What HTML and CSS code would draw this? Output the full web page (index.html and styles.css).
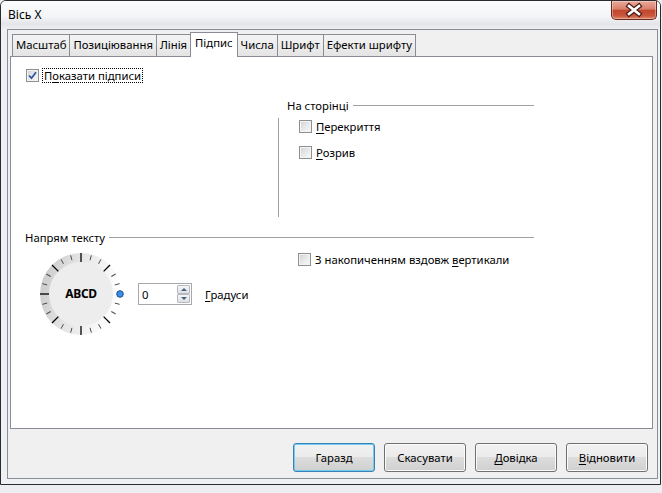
FILE: index.html
```html
<!DOCTYPE html>
<html lang="uk">
<head>
    <meta charset="UTF-8">
    <meta name="viewport" content="width=device-width, initial-scale=1.0">
    <title>Вісь X</title>
    <link rel="stylesheet" href="styles.css">
</head>
<body>
    <div class="window">
        <div class="titlebar">
            <span class="title">Вісь X</span>
            <button class="close" aria-label="Закрити">
                <svg width="44" height="18" viewBox="0 0 44 18">
                    <path d="M17 5 L27 13 M27 5 L17 13" stroke="#4a1d15" stroke-width="5" stroke-linecap="square"/>
                    <path d="M17 5 L27 13 M27 5 L17 13" stroke="#fff" stroke-width="2.6" stroke-linecap="square"/>
                </svg>
            </button>
        </div>
        <div class="client">
            <div class="tabs">
                <div class="tab">Масштаб</div>
                <div class="tab">Позиціювання</div>
                <div class="tab">Лінія</div>
                <div class="tab active">Підпис</div>
                <div class="tab">Числа</div>
                <div class="tab">Шрифт</div>
                <div class="tab">Ефекти шрифту</div>
            </div>
            <div class="panel">
                <label class="check-row show-labels">
                    <span class="check checked">
                        <svg width="11" height="11" viewBox="0 0 11 11"><path d="M2 5.5 L4.5 8.2 L9 2.2" fill="none" stroke="#2f56a0" stroke-width="1.8"/></svg>
                    </span>
                    <span class="focus">П<u>о</u>казати підписи</span>
                </label>

                <div class="top-area">
                    <div></div>
                    <div class="group">
                        <div class="group-head"><span>На сторінці</span><i class="rule"></i></div>
                        <div class="group-body">
                            <label class="check-row"><span class="check"></span><span class="text"><u>П</u>ерекриття</span></label>
                            <label class="check-row"><span class="check"></span><span class="text"><u>Р</u>озрив</span></label>
                        </div>
                    </div>
                </div>

                <div class="group-head wide"><span>Напрям тексту</span><i class="rule"></i></div>
                <div class="bottom-area">
                    <div class="dial-row">
                        <svg class="dial" width="88" height="88" viewBox="0 0 88 88">
                            <defs>
                                <linearGradient id="ring" x1="0" y1="0" x2="1" y2="0.25">
                                    <stop offset="0" stop-color="#c6c6c6"/>
                                    <stop offset="0.55" stop-color="#e8e8e8"/>
                                    <stop offset="1" stop-color="#ffffff"/>
                                </linearGradient>
                            </defs>
                            <circle cx="44" cy="44" r="41" fill="url(#ring)"/>
                            <circle cx="44" cy="44" r="32" fill="#ededed"/>
                            <g stroke="#4a4a4a" stroke-width="0.9">
                                <line x1="44" y1="4" x2="44" y2="9" transform="rotate(15 44 44)"/>
                                <line x1="44" y1="4" x2="44" y2="9" transform="rotate(30 44 44)"/>
                                <line x1="44" y1="4" x2="44" y2="9" transform="rotate(60 44 44)"/>
                                <line x1="44" y1="4" x2="44" y2="9" transform="rotate(75 44 44)"/>
                                <line x1="44" y1="4" x2="44" y2="9" transform="rotate(105 44 44)"/>
                                <line x1="44" y1="4" x2="44" y2="9" transform="rotate(120 44 44)"/>
                                <line x1="44" y1="4" x2="44" y2="9" transform="rotate(150 44 44)"/>
                                <line x1="44" y1="4" x2="44" y2="9" transform="rotate(165 44 44)"/>
                                <line x1="44" y1="4" x2="44" y2="9" transform="rotate(195 44 44)"/>
                                <line x1="44" y1="4" x2="44" y2="9" transform="rotate(210 44 44)"/>
                                <line x1="44" y1="4" x2="44" y2="9" transform="rotate(240 44 44)"/>
                                <line x1="44" y1="4" x2="44" y2="9" transform="rotate(255 44 44)"/>
                                <line x1="44" y1="4" x2="44" y2="9" transform="rotate(285 44 44)"/>
                                <line x1="44" y1="4" x2="44" y2="9" transform="rotate(300 44 44)"/>
                                <line x1="44" y1="4" x2="44" y2="9" transform="rotate(330 44 44)"/>
                                <line x1="44" y1="4" x2="44" y2="9" transform="rotate(345 44 44)"/>
                            </g>
                            <g stroke="#000" stroke-width="1.3">
                                <line x1="44" y1="3" x2="44" y2="12"/>
                                <line x1="44" y1="3" x2="44" y2="12" transform="rotate(45 44 44)"/>
                                <line x1="44" y1="3" x2="44" y2="12" transform="rotate(135 44 44)"/>
                                <line x1="44" y1="3" x2="44" y2="12" transform="rotate(180 44 44)"/>
                                <line x1="44" y1="3" x2="44" y2="12" transform="rotate(225 44 44)"/>
                                <line x1="44" y1="3" x2="44" y2="12" transform="rotate(270 44 44)"/>
                                <line x1="44" y1="3" x2="44" y2="12" transform="rotate(315 44 44)"/>
                            </g>
                            <text x="44" y="48" text-anchor="middle" class="dial-text">ABCD</text>
                            <circle cx="83" cy="44" r="3.3" fill="#3d8fe6" stroke="#1d4f94" stroke-width="1"/>
                        </svg>
                        <div class="spin">
                            <span class="spin-value">0</span>
                            <span class="spin-btns">
                                <span class="spin-btn"><i class="arrow up"></i></span>
                                <span class="spin-btn"><i class="arrow down"></i></span>
                            </span>
                        </div>
                        <span class="unit"><u>Г</u>радуси</span>
                    </div>
                    <label class="check-row stack"><span class="check"></span><span class="text">З накопиченням вздовж <u>в</u>ертикали</span></label>
                </div>
            </div>
            <div class="buttons">
                <button class="btn default">Гаразд</button>
                <button class="btn">Скасувати</button>
                <button class="btn"><u>Д</u>овідка</button>
                <button class="btn"><u>В</u>ідновити</button>
            </div>
        </div>
    </div>
</body>
</html>
```

FILE: styles.css
```css
body {
    margin: 0;
    background: #eceef0;
    font-family: "Noto Sans", sans-serif;
    font-size: 11.3px;
    color: #000;
}
u {
    text-decoration-thickness: 1px;
    text-underline-offset: 2px;
}
.window {
    width: 661px;
    height: 485px;
    box-sizing: border-box;
    border: 1px solid #2b2b2b;
    border-radius: 6px 6px 0 0;
    background: #eef0f3;
    padding: 0 1px 0 6px;
    display: flex;
    flex-direction: column;
}
.titlebar {
    height: 28px;
    margin: 0 -1px 0 -6px;
    padding-left: 7px;
    display: flex;
    justify-content: space-between;
    align-items: center;
    border-radius: 5px 5px 0 0;
    background: linear-gradient(#fbfcfd 0%, #f3f5f7 55%, #e3e5e8 82%, #eceef1 100%);
}
.title {
    font-size: 12px;
    line-height: 16px;
}
.close {
    align-self: flex-start;
    width: 46px;
    height: 19px;
    margin-right: 3px;
    padding: 0;
    border: 1px solid #6a281c;
    border-top: 0;
    border-radius: 0 0 5px 5px;
    background: linear-gradient(#eba99a 0%, #d8806b 45%, #c2462d 52%, #c9563c 80%, #dc8365 100%);
    box-shadow: inset 0 0 0 1px rgba(255, 255, 255, 0.35);
    display: flex;
    align-items: center;
    justify-content: center;
}
.client {
    width: 651px;
    height: 450px;
    box-sizing: border-box;
    border: 1px solid #8a8e96;
    background: #f0f0f0;
    padding: 2px 0 0 2px;
    display: flex;
    flex-direction: column;
}
.tabs {
    height: 24px;
    margin-left: 2px;
    display: flex;
    align-items: flex-end;
}
.tab {
    height: 22px;
    box-sizing: border-box;
    border: 1px solid #898c95;
    border-bottom: 0;
    margin-left: -1px;
    padding: 0 3px;
    line-height: 20px;
    white-space: nowrap;
    background: linear-gradient(#f4f4f4, #e4e4e4);
}
.tab:first-child {
    margin-left: 0;
}
.tab.active {
    height: 25px;
    margin-bottom: -1px;
    padding: 0 4px;
    line-height: 20px;
    background: #fff;
    position: relative;
    z-index: 1;
}
.panel {
    width: 643px;
    height: 373px;
    box-sizing: border-box;
    border: 1px solid #898c95;
    background: #fff;
    padding: 11px 0 0 14px;
}
.check-row {
    display: flex;
    align-items: center;
    gap: 3px;
    height: 15px;
    white-space: nowrap;
}
.check {
    width: 13px;
    height: 13px;
    box-sizing: border-box;
    border: 1px solid #8e8f8f;
    background: linear-gradient(135deg, #cfd1d4 0%, #e9eaeb 55%, #f7f7f7 100%);
    box-shadow: inset 0 0 0 1px #f4f4f4;
    display: flex;
    align-items: center;
    justify-content: center;
    flex: none;
}
.show-labels .check {
    margin-left: 1px;
}
.focus {
    border: 1px dotted #000;
    padding: 0 1px;
    line-height: 13px;
}
.text {
    padding: 0 1px;
}
.top-area {
    display: grid;
    grid-template-columns: 253px 256px;
}
.group {
    margin-top: 15px;
}
.group-head {
    display: flex;
    align-items: center;
    gap: 4px;
    height: 14px;
    padding-left: 9px;
}
.group-head.wide {
    width: 509px;
    box-sizing: border-box;
    padding-left: 0;
    margin-top: 13px;
}
.rule {
    flex: 1;
    border-top: 1px solid #a0a0a0;
}
.group-body {
    margin-top: 6px;
    height: 99px;
    box-sizing: border-box;
    border-left: 1px solid #a0a0a0;
    padding: 1px 0 0 20px;
    display: flex;
    flex-direction: column;
    gap: 11px;
}
.bottom-area {
    display: grid;
    grid-template-columns: 273px auto;
    margin-top: 6px;
}
.dial-row {
    display: flex;
    align-items: center;
    padding-left: 12px;
}
.dial-text {
    font-family: "Noto Sans", sans-serif;
    font-size: 12px;
    font-weight: bold;
    letter-spacing: -0.3px;
}
.spin {
    width: 54px;
    height: 22px;
    box-sizing: border-box;
    margin-left: 13px;
    border: 1px solid #a5a8ad;
    background: #fff;
    display: flex;
    align-items: center;
    padding: 1px 1px 1px 3px;
}
.spin-value {
    flex: 1;
}
.spin-btns {
    width: 13px;
    height: 18px;
    display: flex;
    flex-direction: column;
}
.spin-btn {
    flex: 1;
    border: 1px solid #b6b9be;
    border-radius: 1px;
    background: linear-gradient(#f6f6f6, #dde0e4);
    display: flex;
    align-items: center;
    justify-content: center;
}
.arrow {
    width: 0;
    height: 0;
    border-left: 3px solid transparent;
    border-right: 3px solid transparent;
}
.arrow.up {
    border-bottom: 3px solid #4b5f86;
}
.arrow.down {
    border-top: 3px solid #4b5f86;
}
.unit {
    margin-left: 13px;
}
.stack {
    margin-top: 2px;
}
.buttons {
    margin-top: 14px;
    padding-right: 9px;
    display: flex;
    justify-content: flex-end;
    gap: 9px;
}
.btn {
    width: 82px;
    height: 29px;
    padding: 0;
    border: 1px solid #707070;
    border-radius: 3px;
    font-family: inherit;
    font-size: 11.3px;
    color: #000;
    background: linear-gradient(#f2f2f2 0%, #ebebeb 49%, #dddddd 50%, #cfcfcf 100%);
    box-shadow: inset 0 0 0 1px #fbfbfb;
}
.btn.default {
    border-color: #3c7fb1;
    box-shadow: inset 0 0 0 1px #6fcdf5;
}
```
